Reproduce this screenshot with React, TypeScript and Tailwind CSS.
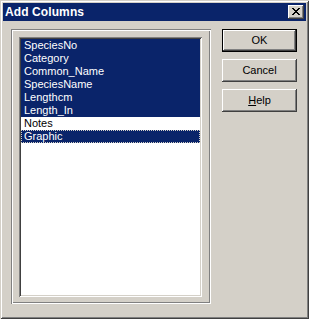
import React from 'react';

const items = [
  { label: 'SpeciesNo', selected: true },
  { label: 'Category', selected: true },
  { label: 'Common_Name', selected: true },
  { label: 'SpeciesName', selected: true },
  { label: 'Lengthcm', selected: true },
  { label: 'Length_In', selected: true },
  { label: 'Notes', selected: false },
  { label: 'Graphic', selected: true, focused: true },
];

const raised =
  'shadow-[inset_-1px_-1px_#404040,inset_1px_1px_#ffffff,inset_-2px_-2px_#808080,inset_2px_2px_#d4d0c8]';

const Button: React.FC<{ children: React.ReactNode; isDefault?: boolean }> = ({ children, isDefault }) => (
  <div
    className={`w-[75px] h-[23px] flex items-center justify-center bg-[#d4d0c8] text-black ${
      isDefault
        ? 'shadow-[inset_1px_1px_#000,inset_-1px_-1px_#000,inset_-2px_-2px_#404040,inset_2px_2px_#ffffff,inset_-3px_-3px_#808080]'
        : raised
    }`}
  >
    {children}
  </div>
);

export default function App() {
  return (
    <div
      className="w-[309px] h-[319px] bg-[#d4d0c8] p-[3px] flex flex-col shadow-[inset_1px_1px_#d4d0c8,inset_-1px_-1px_#404040,inset_2px_2px_#ffffff,inset_-2px_-2px_#808080] text-[11px] leading-[13px]"
      style={{ fontFamily: '"Liberation Sans", Arial, sans-serif' }}
    >
      {/* Title bar */}
      <div className="h-[18px] bg-[#0a246a] flex items-center justify-between pl-[2px] pr-[2px]">
        <span className="text-white font-bold text-[12px] tracking-[0.1px]">Add Columns</span>
        <div className={`w-[16px] h-[14px] bg-[#d4d0c8] flex items-center justify-center ${raised}`}>
          <svg width="8" height="7" viewBox="0 0 8 7" className="mb-[1px]">
            <path d="M0 0h2v1h1v1h2V1h1V0h2v1H7v1H6v1H5v1h1v1h1v1h1v1H6V6H5V5H3v1H2v1H0V6h1V5h1V4h1V3H2V2H1V1H0z" fill="#000" />
          </svg>
        </div>
      </div>

      {/* Body */}
      <div className="flex pl-[8px] pt-[8px]">
        {/* Etched frame */}
        <div className="w-[200px] h-[275px] shadow-[inset_1px_1px_#808080,inset_-1px_-1px_#ffffff,inset_2px_2px_#ffffff,inset_-2px_-2px_#808080] pl-[8px] pt-[8px]">
          {/* Sunken listbox */}
          <div className="w-[183px] h-[260px] bg-white p-[2px] shadow-[inset_1px_1px_#808080,inset_-1px_-1px_#ffffff,inset_2px_2px_#404040,inset_-2px_-2px_#d4d0c8]">
            <div className="flex flex-col">
              {items.map((it) => (
                <div
                  key={it.label}
                  className={`h-[13px] pl-[3px] whitespace-nowrap ${
                    it.selected ? 'bg-[#0a246a] text-white' : 'bg-white text-black'
                  } ${it.focused ? 'outline-1 outline-dotted outline-[#d4d0c8] -outline-offset-1' : ''}`}
                >
                  {it.label}
                </div>
              ))}
            </div>
          </div>
        </div>

        {/* Buttons */}
        <div className="ml-[11px] flex flex-col gap-[7px]">
          <Button isDefault>OK</Button>
          <Button>Cancel</Button>
          <Button>
            <span>
              <span className="underline">H</span>elp
            </span>
          </Button>
        </div>
      </div>
    </div>
  );
}
